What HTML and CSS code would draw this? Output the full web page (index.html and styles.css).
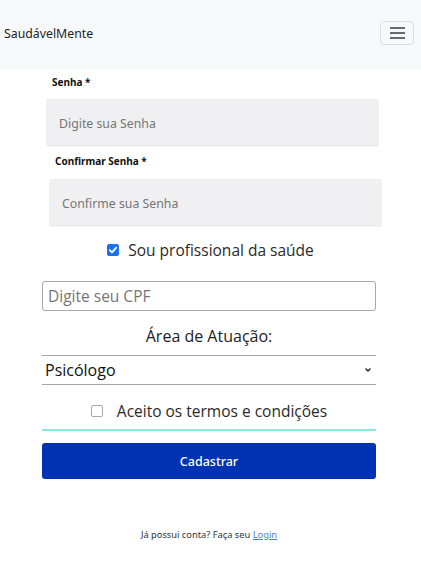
FILE: index.html
```html
<!DOCTYPE html>
<html lang="pt">
<head>
<meta charset="utf-8">
<link rel="stylesheet" href="styles.css">
</head>
<body>
<nav class="navbar">
  <span class="brand">SaudávelMente</span>
  <button class="toggler" aria-label="menu">
    <span class="bar"></span><span class="bar"></span><span class="bar"></span>
  </button>
</nav>
<main class="form">
  <div class="field field-a">
    <label class="label">Senha *</label>
    <div class="input-fill">Digite sua Senha</div>
  </div>
  <div class="field field-b">
    <label class="label">Confirmar Senha *</label>
    <div class="input-fill">Confirme sua Senha</div>
  </div>
  <div class="check-row check-pro">
    <span class="box checked">
      <svg width="10" height="10" viewBox="0 0 10 10"><path d="M1.8 5.2 L4 7.4 L8.3 2.6" fill="none" stroke="#fff" stroke-width="1.8" stroke-linecap="round" stroke-linejoin="round"/></svg>
    </span>
    <span class="check-text">Sou profissional da saúde</span>
  </div>
  <div class="cpf">Digite seu CPF</div>
  <div class="area-title">Área de Atuação:</div>
  <div class="select">
    <span>Psicólogo</span>
    <svg width="8" height="6" viewBox="0 0 8 6"><path d="M1.5 1.5 L4 4 L6.5 1.5" fill="none" stroke="#222" stroke-width="1.4"/></svg>
  </div>
  <div class="check-row check-terms">
    <span class="box"></span>
    <span class="check-text">Aceito os termos e condições</span>
  </div>
  <div class="teal-line"></div>
  <button class="submit">Cadastrar</button>
  <p class="footer">Já possui conta? Faça seu <a href="#">Login</a></p>
</main>
</body>
</html>
```

FILE: styles.css
```css
* { box-sizing: border-box; }
html, body { margin: 0; padding: 0; background: #fff; }
body { font-family: "Open Sans", "Noto Sans", sans-serif; color: #222; }

.navbar {
  height: 70px;
  background: #f7f8fa;
  display: flex;
  align-items: center;
  justify-content: space-between;
  padding: 0 7px 0 4px;
}
.brand { font-family: "Noto Sans", sans-serif; font-size: 12.3px; color: #1f1f1f; margin-top: -4px; }
.toggler {
  width: 34px; height: 24px;
  border: 1px solid #dcdde0;
  border-radius: 4px;
  background: transparent;
  display: flex; flex-direction: column; align-items: center; justify-content: center; gap: 3px;
  padding: 0; margin-top: -4px;
}
.toggler .bar { display: block; width: 15px; height: 2px; background: #6a6a6a; }

.form { display: flex; flex-direction: column; padding: 0 45px 0 42px; }

.field { display: flex; flex-direction: column; }
.label { font-family: "Noto Sans", sans-serif; font-weight: 700; font-size: 10px; color: #111; line-height: 14px; }
.field-a { margin-top: 5px; }
.field-a .label { margin-left: 10px; margin-bottom: 10px; }
.field-a .input-fill { margin-left: 4px; margin-right: -3px; }
.field-b { margin-top: 7px; }
.field-b .label { margin-left: 13px; margin-bottom: 11px; }
.field-b .input-fill { margin-left: 7px; margin-right: -6px; }
.input-fill {
  height: 48px; background: #f0f0f2; border-radius: 2px;
  display: flex; align-items: center; padding-left: 13px;
  font-family: "Noto Sans", sans-serif; font-size: 12.3px; color: #757575;
}

.check-row { display: flex; align-items: center; justify-content: center; font-size: 15.5px; color: #2a2a2a; }
.check-pro { margin-top: 13px; height: 20px; gap: 9px; margin-left: 3px; }
.box { width: 12px; height: 12px; border: 1px solid #8f8f8f; border-radius: 2px; background: #fff; display: inline-flex; align-items: center; justify-content: center; }
.box.checked { background: #1a6ff2; border-color: #1a6ff2; }
.check-terms { margin-top: 16px; height: 20px; gap: 14px; margin-left: 0; }
.check-terms .box { border-color: #a8a8a8; }

.cpf {
  margin-top: 21px; height: 30px; border: 1px solid #a9a9a9; border-radius: 3px;
  display: flex; align-items: center; padding-left: 5px; font-size: 15.5px; color: #767676;
}
.area-title { margin-top: 14px; text-align: center; font-size: 16px; color: #222; line-height: 22px; }
.select {
  margin-top: 8px; height: 30px; border-top: 1px solid #a5a5a5; border-bottom: 1px solid #a5a5a5;
  display: flex; align-items: center; justify-content: space-between; padding: 0 4px 0 3px; font-size: 16px; color: #111;
}
.teal-line { margin-top: 8px; height: 2px; background: #86ebd5; }
.submit {
  margin-top: 12px; height: 36px; border: none; border-radius: 3px; background: #0033b4;
  color: #fff; font-family: "Noto Sans", sans-serif; font-size: 12.5px; font-weight: 500;
}
.footer { margin: 49px 0 0; text-align: center; font-family: "Noto Sans", sans-serif; font-size: 9.3px; color: #333; }
.footer a { color: #4a7cf5; }
```
